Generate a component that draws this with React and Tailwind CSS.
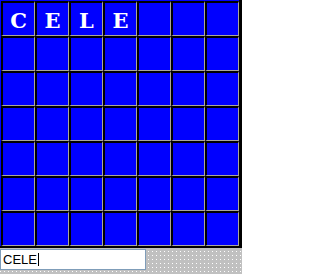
const rows = [
  ['C', 'E', 'L', 'E', '', '', ''],
  ['', '', '', '', '', '', ''],
  ['', '', '', '', '', '', ''],
  ['', '', '', '', '', '', ''],
  ['', '', '', '', '', '', ''],
  ['', '', '', '', '', '', ''],
  ['', '', '', '', '', '', ''],
];

export default function App() {
  return (
    <div className="h-[274px] w-[242px] overflow-hidden bg-[#c0c0c0] bg-[conic-gradient(at_1px_1px,transparent_75%,#ffffff_0)] bg-[length:4px_4px] bg-[position:0_3px]">
      {/* board */}
      <div className="grid w-[242px] grid-cols-[repeat(7,34px)] grid-rows-[repeat(7,35px)] border-r-[3px] border-b-2 border-black bg-[#0000ff] pt-px pl-px">
        {rows.flat().map((ch, i) => (
          <div
            key={i}
            className="flex items-center justify-center border-t-2 border-l-2 border-r border-b border-t-black border-l-black border-r-[#aaa69c] border-b-[#aaa69c] bg-[#0000ff] pt-[2px] font-['DejaVu_Serif',serif] text-[21px] font-bold leading-none text-white"
          >
            {ch}
          </div>
        ))}
      </div>

      {/* guess box */}
      <div className="mt-px flex h-[21px] w-[146px] items-center border border-[#7f9db9] bg-white pl-[2px] font-['Liberation_Sans',Arial,sans-serif] text-[13px] leading-none text-black">
        <span>CELE</span>
        <span className="ml-px h-[13px] w-px bg-black" />
      </div>
    </div>
  );
}
